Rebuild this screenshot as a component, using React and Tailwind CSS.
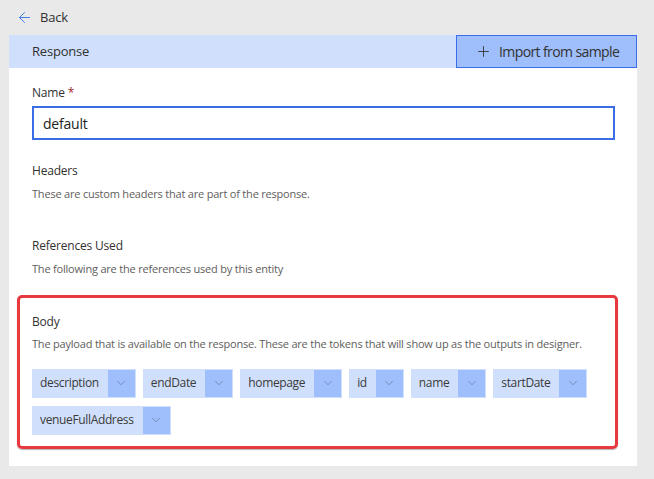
import { ArrowLeft, Plus, ChevronDown } from "lucide-react";

const tokens = [
  "description",
  "endDate",
  "homepage",
  "id",
  "name",
  "startDate",
  "venueFullAddress",
];

function Token({ label }) {
  return (
    <div className="flex h-[29px] bg-[#d0e0fc] p-px">
      <span className="flex items-center pl-[7px] pr-[9px] text-[12px] tracking-[-0.35px] text-[#3b3a39]">
        {label}
      </span>
      <span className="flex w-[27px] items-center justify-center bg-[#9ebefc]">
        <ChevronDown size={14} strokeWidth={1} className="text-[#5a6b8c]" />
      </span>
    </div>
  );
}

export default function App() {
  return (
    <div
      className="min-h-[479px] w-full bg-[#e9e9e9] pb-[14px] text-[#323130]"
      style={{ fontFamily: '"Segoe UI", "Open Sans", "Noto Sans", sans-serif' }}
    >
      {/* BACK */}
      <div className="flex h-[35px] items-center gap-[7px] pl-[16px]">
        <ArrowLeft size={17} strokeWidth={1.25} className="text-[#2f6ee8]" />
        <span className="text-[13px] tracking-[-0.2px] text-[#323130]">Back</span>
      </div>

      {/* PANEL */}
      <div className="ml-[9px] mr-[17px] bg-white">
        <div className="flex h-[33px] items-center justify-between bg-[#d0e0fc]">
          <span className="pl-[23px] text-[13px] tracking-[-0.2px] text-[#323130]">Response</span>
          <button className="flex h-[33px] w-[181px] items-center gap-[7px] border border-[#3b6ee6] bg-[#9ebefc] pl-[18px] text-[14px] tracking-[-0.6px] text-[#323130]">
            <Plus size={17} strokeWidth={1.25} />
            Import from sample
          </button>
        </div>

        <div className="px-[23px] pb-[17px] pt-[16px]">
          <div className="text-[12px] tracking-[-0.2px]">
            Name <span className="text-[#a4262c]">*</span>
          </div>
          <div className="mt-[4px] mr-[-1px] flex h-[34px] items-center border-2 border-[#3b6ee6] pl-[9px] text-[14px] tracking-[-0.2px] text-[#201f1e]">
            default
          </div>

          <div className="mt-[22px] text-[12px] tracking-[-0.2px]">Headers</div>
          <div className="mt-[6px] text-[11px] tracking-[-0.2px] text-[#605e5c]">
            These are custom headers that are part of the response.
          </div>

          <div className="mt-[34px] text-[12px] tracking-[-0.2px]">References Used</div>
          <div className="mt-[6px] text-[11px] tracking-[-0.2px] text-[#605e5c]">
            The following are the references used by this entity
          </div>

          {/* BODY */}
          <div className="ml-[-15px] mr-[-4px] mt-[18px] rounded-[5px] border-[3px] border-[#e8393e] pl-[12px] pr-[4px] pb-[11px] pt-[15px] shadow-[0_1px_1px_rgba(0,0,0,0.3)]">
            <div className="text-[12px] tracking-[-0.2px]">Body</div>
            <div className="mt-[5px] text-[11px] tracking-[-0.2px] text-[#605e5c]">
              The payload that is available on the response. These are the tokens that will show up as
              the outputs in designer.
            </div>
            <div className="mt-[16px] flex flex-wrap gap-x-[7px] gap-y-[8px]">
              {tokens.map((t) => (
                <Token key={t} label={t} />
              ))}
            </div>
          </div>
        </div>
      </div>
    </div>
  );
}
